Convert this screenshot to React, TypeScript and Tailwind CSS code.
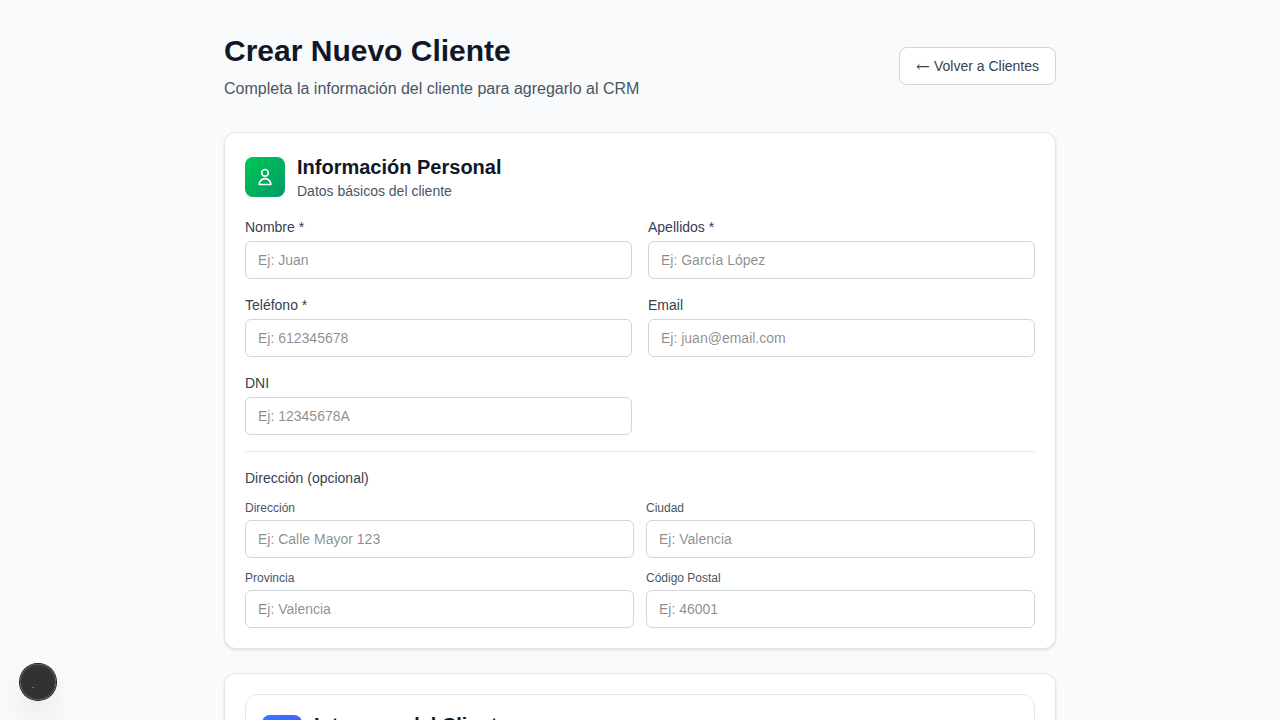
import React from 'react';

const inputClass =
  'block w-full h-[38px] rounded-md border border-gray-300 bg-white px-3 py-2 text-sm text-[#171717] outline-none';

type FieldProps = { label: string; placeholder: string; small?: boolean };

function Field({ label, placeholder, small }: FieldProps) {
  return (
    <div>
      <label
        className={
          small
            ? 'mb-1 block text-xs font-medium text-gray-600'
            : 'mb-1 block text-sm font-medium text-gray-700'
        }
      >
        {label}
      </label>
      <input type="text" placeholder={placeholder} className={inputClass} />
    </div>
  );
}

export default function App() {
  return (
    <div className="h-screen overflow-hidden bg-[#f9fafc] font-['Liberation_Sans',Arial,sans-serif] text-[#171717]">
      <div className="mx-auto max-w-4xl px-8 py-8">
        <header className="mb-8 flex h-17 items-center justify-between">
          <div className="pt-0.5">
            <h1 className="text-3xl font-bold text-gray-900">Crear Nuevo Cliente</h1>
            <p className="mt-2 text-base text-gray-600">
              Completa la información del cliente para agregarlo al CRM
            </p>
          </div>
          <button className="flex h-[38px] items-center gap-1 rounded-lg border border-gray-300 bg-white px-4 text-sm font-medium text-gray-700">
            <span className="w-[13.9px] pt-0.5 font-['DejaVu_Serif',serif] text-[16.5px] leading-none font-normal">←</span>
            <span>Volver a Clientes</span>
          </button>
        </header>

        <section className="mb-6 rounded-xl border border-gray-200 bg-white p-5 shadow-sm">
          <div className="mb-4 flex items-center gap-3">
            <div className="flex h-10 w-10 items-center justify-center rounded-lg bg-gradient-to-br from-green-500 to-emerald-600">
              <svg className="h-5 w-5 text-white" fill="none" stroke="currentColor" viewBox="0 0 24 24">
                <path
                  strokeLinecap="round"
                  strokeLinejoin="round"
                  strokeWidth={2}
                  d="M16 7a4 4 0 11-8 0 4 4 0 018 0zM12 14a7 7 0 00-7 7h14a7 7 0 00-7-7z"
                />
              </svg>
            </div>
            <div>
              <h2 className="text-xl font-bold text-gray-900">Información Personal</h2>
              <p className="text-sm text-gray-600">Datos básicos del cliente</p>
            </div>
          </div>

          <div className="grid grid-cols-2 gap-4">
            <Field label="Nombre *" placeholder="Ej: Juan" />
            <Field label="Apellidos *" placeholder="Ej: García López" />
            <Field label="Teléfono *" placeholder="Ej: 612345678" />
            <Field label="Email" placeholder="Ej: juan@email.com" />
            <Field label="DNI" placeholder="Ej: 12345678A" />
          </div>

          <div className="mt-4 border-t border-gray-200 pt-4">
            <h3 className="mb-3 text-sm font-medium text-gray-700">Dirección (opcional)</h3>
            <div className="grid grid-cols-2 gap-3">
              <Field small label="Dirección" placeholder="Ej: Calle Mayor 123" />
              <Field small label="Ciudad" placeholder="Ej: Valencia" />
              <Field small label="Provincia" placeholder="Ej: Valencia" />
              <Field small label="Código Postal" placeholder="Ej: 46001" />
            </div>
          </div>
        </section>

        <section className="rounded-xl border border-gray-200 bg-white p-5 shadow-sm">
          <div className="rounded-xl border border-gray-200 bg-white p-4">
            <div className="flex items-center gap-3">
              <div className="h-10 w-10 rounded-lg bg-gradient-to-br from-blue-500 to-indigo-600" />
              <div>
                <h2 className="text-xl font-bold text-gray-900">Intereses del Cliente</h2>
                <p className="h-5 text-sm" />
              </div>
            </div>
          </div>
        </section>
      </div>

      <div className="fixed bottom-5 left-5 flex h-9 w-9 items-center justify-center rounded-full bg-black/80 shadow-[0_0_0_1px_#171717,inset_0_0_0_1px_rgba(255,255,255,0.14),0_16px_32px_-8px_rgba(0,0,0,0.24)]">
        <svg className="h-9 w-9" viewBox="0 0 36 36" fill="none">
          <path d="M12 23.5h2" stroke="#8a8a8a" strokeWidth="0.8" />
        </svg>
      </div>
    </div>
  );
}
